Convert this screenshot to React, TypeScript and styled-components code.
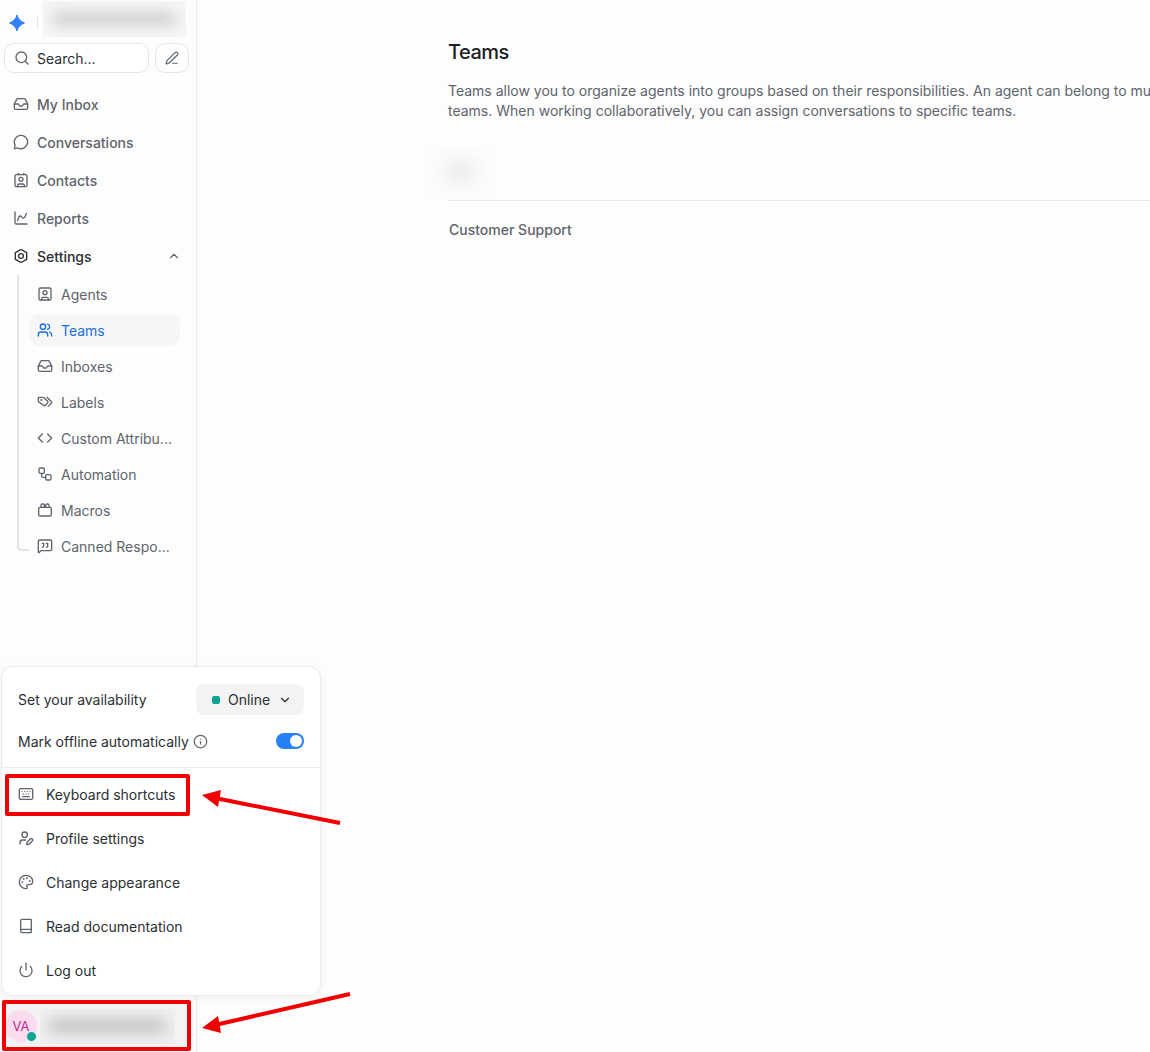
import React from 'react';
import styled, { createGlobalStyle } from 'styled-components';
import {
  Book, ChartSpline, ChevronDown, ChevronUp, Code, Contact, Inbox, Info, Keyboard, MessageCircle,
  MessageSquareQuote, Palette, PenLine, Power, Search, SquareUser, UserPen, Users, Workflow,
} from 'lucide-react';

const Global = createGlobalStyle`
  html, body { margin: 0; padding: 0; height: 100%; background: #fdfdfd; overflow: hidden; }
  body { font-family: Inter, "Noto Sans", sans-serif; -webkit-font-smoothing: antialiased; }
  #root { height: 100%; }
  * { box-sizing: border-box; }
`;

const Page = styled.div`
  position: relative;
  display: flex;
  width: 1150px;
  height: 1052px;
  overflow: hidden;
  background: #fdfdfd;
`;

const Sidebar = styled.aside`
  flex: 0 0 197px;
  display: flex;
  flex-direction: column;
  background: #fdfdfd;
  border-right: 1px solid #ebebeb;
`;

const Brand = styled.div`
  display: flex;
  align-items: center;
  height: 43px;
  padding: 1px 10px 0 9px;
`;

const LogoMark = styled.svg`
  width: 16px;
  height: 16px;
  flex: none;
  margin-top: 2px;
`;

const BrandSep = styled.span`
  width: 1px;
  height: 12px;
  margin: 2px 5px 0 12px;
  background: #e4e4e4;
`;

const BlurBox = styled.div<{ $w: number; $h: number; $bg: string; $tone: string }>`
  width: ${p => p.$w}px;
  height: ${p => p.$h}px;
  flex: none;
  overflow: hidden;
  display: flex;
  align-items: center;
  justify-content: center;
  background: ${p => p.$bg};

  &::before {
    content: '';
    width: 88%;
    height: 38%;
    border-radius: 10px;
    background: ${p => p.$tone};
    filter: blur(7px);
  }
`;

const BrandBlur = styled(BlurBox)`
  align-self: flex-start;
`;

const TeamsBlur = styled(BlurBox)`
  &::before {
    width: 45%;
    height: 45%;
    filter: blur(9px);
  }
`;

const SearchRow = styled.div`
  display: flex;
  gap: 6px;
  padding: 0 7px 0 4px;
`;

const SearchBox = styled.div`
  flex: 1;
  height: 30px;
  display: flex;
  align-items: center;
  gap: 7px;
  padding-left: 9px;
  border: 1px solid #e6e6e6;
  border-radius: 10px;
  font-size: 14px;
  color: #2b2f33;
  background: #fff;
`;

const SquareBtn = styled.div`
  width: 34px;
  height: 30px;
  display: flex;
  align-items: center;
  justify-content: center;
  border: 1px solid #e6e6e6;
  border-radius: 10px;
  color: #60646c;
`;

const Nav = styled.nav`
  display: flex;
  flex-direction: column;
  padding: 12px 0 0 13px;
`;

const NavItem = styled.div<{ $strong?: boolean }>`
  height: 38px;
  display: flex;
  align-items: center;
  gap: 8px;
  padding-right: 15px;
  font-size: 14px;
  font-weight: 500;
  color: ${p => (p.$strong ? '#2b2f33' : '#60646c')};
  svg { flex: none; }
`;

const Chevron = styled.span`
  margin-left: auto;
  display: flex;
  color: #60646c;
`;

const SubNav = styled.div`
  position: relative;
  display: flex;
  flex-direction: column;
  padding: 0 16px;
  margin-top: 3px;

  &::before {
    content: '';
    position: absolute;
    left: 4px;
    top: -3px;
    bottom: 15px;
    width: 10px;
    border-left: 2px solid #e4e4e4;
    border-bottom: 2px solid #e4e4e4;
    border-bottom-left-radius: 4px;
  }
`;

const SubItem = styled.div<{ $active?: boolean }>`
  height: 32px;
  margin-bottom: 4px;
  display: flex;
  align-items: center;
  gap: 8px;
  padding-left: 8px;
  border-radius: 10px;
  font-size: 14px;
  white-space: nowrap;
  background: ${p => (p.$active ? '#f6f6f6' : 'transparent')};
  color: ${p => (p.$active ? '#1c6fd9' : '#60646c')};
  svg { flex: none; }
`;

const ProfileRow = styled.div`
  margin-top: auto;
  margin-bottom: 4px;
  margin-left: 4px;
  width: 184px;
  height: 44px;
  display: flex;
  align-items: center;
  gap: 3px;
  padding-left: 1px;
  background: #f3f3f3;
`;

const Avatar = styled.div`
  position: relative;
  flex: none;
  width: 32px;
  height: 32px;
  border-radius: 50%;
  display: flex;
  align-items: center;
  justify-content: center;
  background: #fbdcef;
  color: #c2298a;
  font-size: 13px;
`;

const AvatarDot = styled.span`
  position: absolute;
  right: 0;
  bottom: 0;
  width: 11px;
  height: 11px;
  border-radius: 50%;
  background: #12a594;
  border: 1px solid #f3f3f3;
`;

const Main = styled.main`
  flex: 1;
  min-width: 0;
  overflow: hidden;
  padding: 40px 0 0 251px;
`;

const Content = styled.div`
  width: 800px;
`;

const Title = styled.h1`
  margin: 0;
  font-size: 20px;
  line-height: 24px;
  font-weight: 500;
  letter-spacing: -0.5px;
  color: #1c2024;
`;

const Description = styled.p`
  margin: 17px 0 0;
  width: 770px;
  font-size: 14px;
  line-height: 20px;
  color: #60646c;
`;

const TeamsHead = styled.div`
  margin: 28px 0 0 -19px;
  height: 51px;
  display: flex;
  align-items: flex-start;
`;

const Divider = styled.div`
  height: 1px;
  background: #ebebeb;
`;

const TeamName = styled.div`
  margin-top: 20px;
  padding-left: 1px;
  font-size: 14px;
  line-height: 18px;
  font-weight: 500;
  color: #60646c;
`;

const Popover = styled.div`
  position: absolute;
  left: 1px;
  top: 666px;
  width: 320px;
  height: 330px;
  display: flex;
  flex-direction: column;
  background: #fff;
  border: 1px solid #ebebeb;
  border-radius: 12px;
  box-shadow: 0 2px 8px rgba(0, 0, 0, 0.06);
`;

const PopSection = styled.div`
  height: 100px;
  display: flex;
  flex-direction: column;
`;

const PopRow = styled.div<{ $h: number }>`
  height: ${p => p.$h}px;
  display: flex;
  align-items: center;
  padding: 0 16px;
  font-size: 14px;
  color: #2b2f33;
`;

const AvailabilityBtn = styled.div`
  margin-left: auto;
  width: 108px;
  height: 31px;
  display: flex;
  align-items: center;
  gap: 8px;
  padding-left: 16px;
  border-radius: 8px;
  background: #f3f3f3;
  color: #2b2f33;
`;

const StatusSquare = styled.span`
  width: 8px;
  height: 8px;
  border-radius: 2px;
  background: #12a594;
`;

const InfoWrap = styled.span`
  display: flex;
  margin-left: 4px;
  color: #60646c;
`;

const Toggle = styled.span`
  margin-left: auto;
  width: 28px;
  height: 16px;
  display: flex;
  align-items: center;
  justify-content: flex-end;
  padding-right: 2px;
  border-radius: 8px;
  background: #2781f6;

  &::after {
    content: '';
    width: 12px;
    height: 12px;
    border-radius: 50%;
    background: #fff;
  }
`;

const PopDivider = styled.div`
  height: 1px;
  background: #ebebeb;
`;

const MenuItem = styled.div`
  height: 44px;
  display: flex;
  align-items: center;
  gap: 12px;
  padding-left: 16px;
  font-size: 14px;
  color: #2b2f33;
  svg { flex: none; color: #60646c; }
`;

const MenuList = styled.div`
  display: flex;
  flex-direction: column;
  padding-top: 4px;
`;

const RedBox = styled.div<{ $x: number; $y: number; $w: number; $h: number }>`
  position: absolute;
  left: ${p => p.$x}px;
  top: ${p => p.$y}px;
  width: ${p => p.$w}px;
  height: ${p => p.$h}px;
  border: 4px solid #f00000;
  border-radius: 2px;
  pointer-events: none;
`;

const Arrows = styled.svg`
  position: absolute;
  left: 0;
  top: 0;
  pointer-events: none;
`;

const MacrosIcon = () => (
  <svg width="16" height="16" viewBox="0 0 24 24" fill="none" stroke="currentColor" strokeWidth="2" strokeLinecap="round" strokeLinejoin="round">
    <rect x="2.5" y="8" width="19" height="13" rx="2" />
    <path d="M6 8V5a2 2 0 0 1 2-2h1a2 2 0 0 1 2 2v3M13 8V5a2 2 0 0 1 2-2h1a2 2 0 0 1 2 2v3" />
  </svg>
);

const LabelsIcon = () => (
  <svg width="16" height="16" viewBox="0 0 24 24" fill="none" stroke="currentColor" strokeWidth="2" strokeLinecap="round" strokeLinejoin="round">
    <path d="M2 6a1 1 0 0 1 1-1h6.2a2 2 0 0 1 1.4.6l5.3 5.3a2 2 0 0 1 0 2.8l-3.3 3.3a2 2 0 0 1-2.8 0l-7.2-5.2A2 2 0 0 1 2 11.4z" />
    <path d="M15 5l6.4 6.2a2 2 0 0 1 0 2.6L17 18.5" />
    <circle cx="6.5" cy="9" r=".6" fill="currentColor" />
  </svg>
);

const SettingsHex = () => (
  <svg width="16" height="16" viewBox="0 0 24 24" fill="none" stroke="currentColor" strokeWidth="2" strokeLinejoin="round">
    <path d="M12 2.2 20.5 7v10L12 21.8 3.5 17V7z" />
    <circle cx="12" cy="12" r="3.6" />
  </svg>
);

const sub = [
  { label: 'Agents', icon: <SquareUser size={16} /> },
  { label: 'Teams', icon: <Users size={16} />, active: true },
  { label: 'Inboxes', icon: <Inbox size={16} /> },
  { label: 'Labels', icon: <LabelsIcon /> },
  { label: 'Custom Attribu...', icon: <Code size={16} /> },
  { label: 'Automation', icon: <Workflow size={16} /> },
  { label: 'Macros', icon: <MacrosIcon /> },
  { label: 'Canned Respo...', icon: <MessageSquareQuote size={16} /> },
];

const top = [
  { label: 'My Inbox', icon: <Inbox size={16} /> },
  { label: 'Conversations', icon: <MessageCircle size={16} /> },
  { label: 'Contacts', icon: <Contact size={16} /> },
  { label: 'Reports', icon: <ChartSpline size={16} /> },
];

const menu = [
  { label: 'Keyboard shortcuts', icon: <Keyboard size={16} /> },
  { label: 'Profile settings', icon: <UserPen size={16} /> },
  { label: 'Change appearance', icon: <Palette size={16} /> },
  { label: 'Read documentation', icon: <Book size={16} /> },
  { label: 'Log out', icon: <Power size={16} /> },
];

export default function App() {
  return (
    <Page>
      <Global />
      <Sidebar>
        <Brand>
          <LogoMark viewBox="0 0 16 16">
            <path d="M8 0C8.8 3.6 11.6 6.6 15.5 8 11.6 9.4 8.8 12.4 8 16 7.2 12.4 4.4 9.4.5 8 4.4 6.6 7.2 3.6 8 0z" fill="#2f81f7" stroke="#2f81f7" strokeWidth="1" strokeLinejoin="round" />
          </LogoMark>
          <BrandSep />
          <BrandBlur $w={143} $h={36} $bg="#f6f6f6" $tone="#cfcfcf" />
        </Brand>
        <SearchRow>
          <SearchBox>
            <Search size={16} color="#60646c" />
            Search...
          </SearchBox>
          <SquareBtn>
            <PenLine size={14} />
          </SquareBtn>
        </SearchRow>
        <Nav>
          {top.map(i => (
            <NavItem key={i.label}>
              {i.icon}
              {i.label}
            </NavItem>
          ))}
          <NavItem $strong>
            <SettingsHex />
            Settings
            <Chevron>
              <ChevronUp size={14} />
            </Chevron>
          </NavItem>
          <SubNav>
            {sub.map(i => (
              <SubItem key={i.label} $active={i.active}>
                {i.icon}
                {i.label}
              </SubItem>
            ))}
          </SubNav>
        </Nav>
        <ProfileRow>
          <Avatar>
            VA
            <AvatarDot />
          </Avatar>
          <BlurBox $w={135} $h={35} $bg="#efefef" $tone="#c4c4c4" />
        </ProfileRow>
      </Sidebar>
      <Main>
        <Content>
          <Title>Teams</Title>
          <Description>
            Teams allow you to organize agents into groups based on their responsibilities. An agent can belong to multiple
            teams. When working collaboratively, you can assign conversations to specific teams.
          </Description>
          <TeamsHead>
            <TeamsBlur $w={63} $h={44} $bg="#fcfcfc" $tone="#e8e8e8" />
          </TeamsHead>
          <Divider />
          <TeamName>Customer Support</TeamName>
        </Content>
      </Main>
      <Popover>
        <PopSection>
          <PopRow $h={65}>
            Set your availability
            <AvailabilityBtn>
              <StatusSquare />
              Online
              <ChevronDown size={14} />
            </AvailabilityBtn>
          </PopRow>
          <PopRow $h={18}>
            Mark offline automatically
            <InfoWrap>
              <Info size={15} />
            </InfoWrap>
            <Toggle />
          </PopRow>
        </PopSection>
        <PopDivider />
        <MenuList>
          {menu.map(i => (
            <MenuItem key={i.label}>
              {i.icon}
              {i.label}
            </MenuItem>
          ))}
        </MenuList>
      </Popover>
      <RedBox $x={5} $y={774} $w={185} $h={42} />
      <RedBox $x={2} $y={1000} $w={189} $h={51} />
      <Arrows width="1150" height="1052" viewBox="0 0 1150 1052">
        <line x1="340" y1="823" x2="215" y2="798" stroke="#f00000" strokeWidth="4" />
        <polygon points="202,795 221,790 218,807" fill="#f00000" />
        <line x1="350" y1="994" x2="215" y2="1025" stroke="#f00000" strokeWidth="4" />
        <polygon points="202,1028 218,1016 221,1033" fill="#f00000" />
      </Arrows>
    </Page>
  );
}
